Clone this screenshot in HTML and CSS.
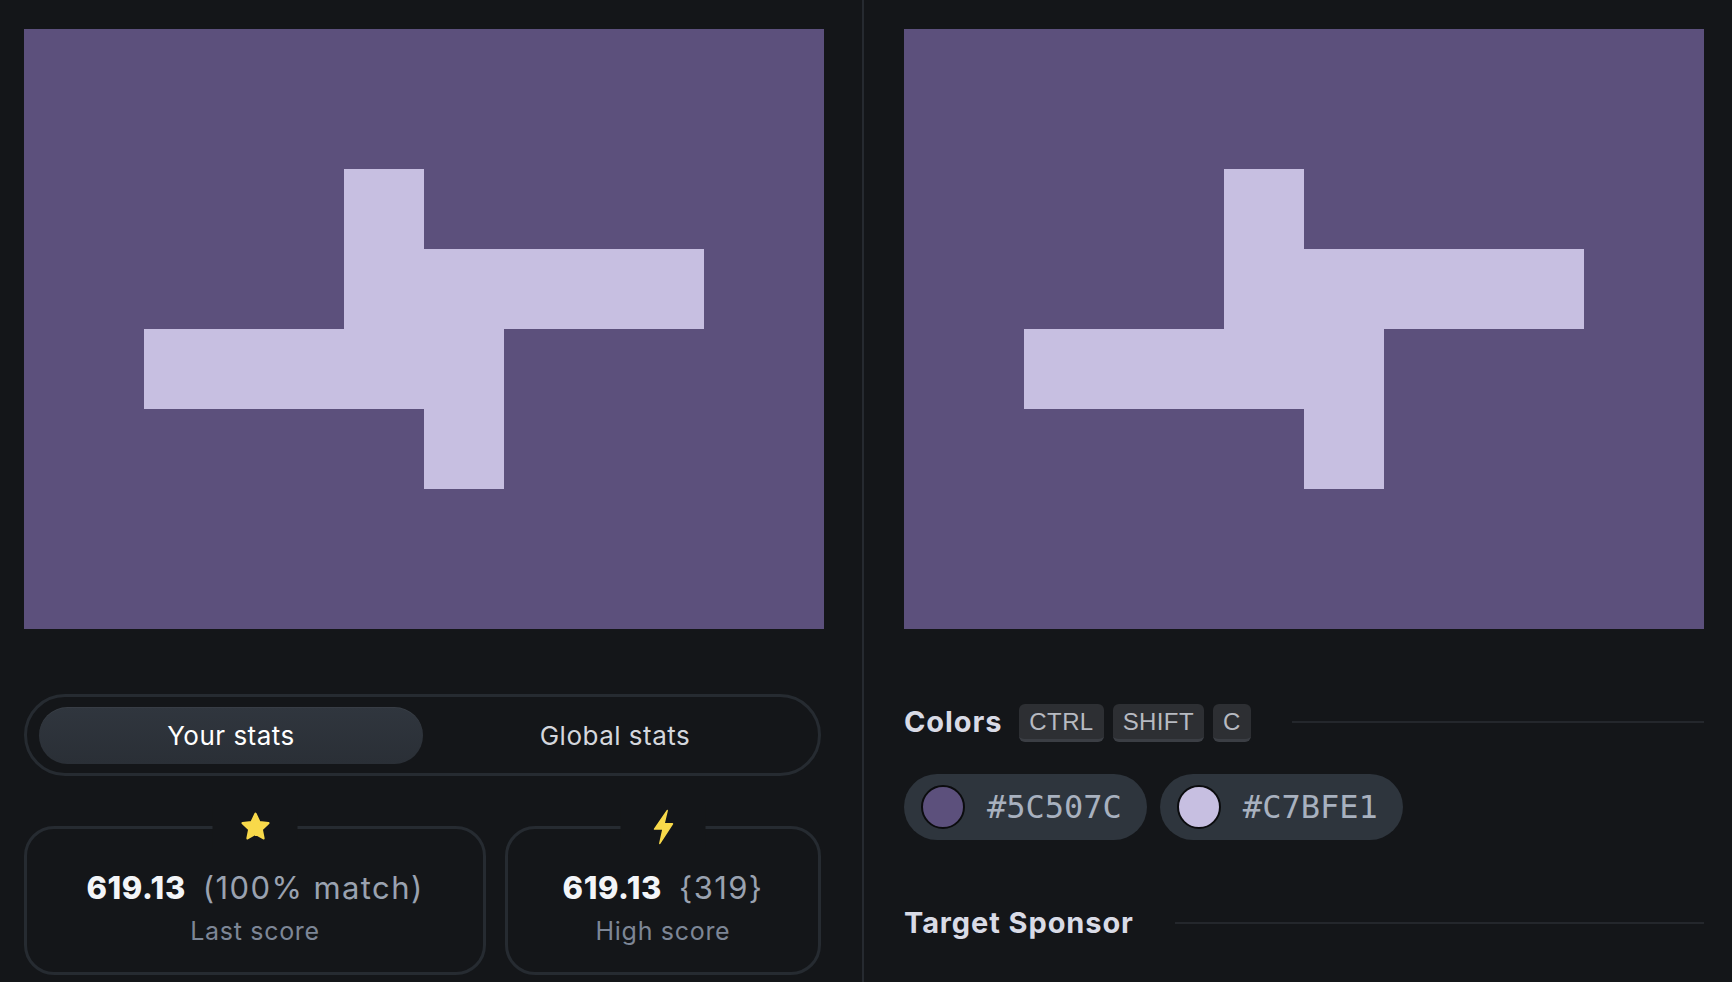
FILE: index.html
```html
<!DOCTYPE html>
<html lang="en">
<head>
<meta charset="utf-8">
<title>Target</title>
<link rel="stylesheet" href="styles.css">
</head>
<body>
<main class="app">
  <section class="panel panel-left">
    <svg class="canvas" width="800" height="600" viewBox="0 0 800 600">
      <rect width="800" height="600" fill="#5C507C"/>
      <g fill="#C7BFE1">
        <rect x="320" y="140" width="80" height="160"/>
        <rect x="320" y="220" width="360" height="80"/>
        <rect x="120" y="300" width="360" height="80"/>
        <rect x="400" y="300" width="80" height="160"/>
      </g>
    </svg>

    <div class="toggle">
      <button class="toggle-btn active">Your stats</button>
      <button class="toggle-btn">Global stats</button>
    </div>

    <div class="cards">
      <div class="card card-wide">
        <span class="card-icon">
          <svg width="34" height="34" viewBox="0 0 24 24"><path d="M12 2.6l2.75 5.9 6.35.75-4.7 4.4 1.25 6.35L12 16.8 6.35 20l1.25-6.35-4.7-4.4 6.35-.75z" fill="#F8D94A" stroke="#F8D94A" stroke-width="1.6" stroke-linejoin="round"/></svg>
        </span>
        <div class="score"><b>619.13</b><span>(100% match)</span></div>
        <div class="label">Last score</div>
      </div>
      <div class="card card-narrow">
        <span class="card-icon">
          <svg width="24" height="36" viewBox="0 0 22 34"><path d="M14.5 1.5L2.5 19h8l-3 13.5L19.5 14h-8z" fill="#F8D94A" stroke="#F8D94A" stroke-width="1.4" stroke-linejoin="round"/></svg>
        </span>
        <div class="score"><b>619.13</b><span>{319}</span></div>
        <div class="label">High score</div>
      </div>
    </div>
  </section>

  <section class="panel panel-right">
    <svg class="canvas" width="800" height="600" viewBox="0 0 800 600">
      <rect width="800" height="600" fill="#5C507C"/>
      <g fill="#C7BFE1">
        <rect x="320" y="140" width="80" height="160"/>
        <rect x="320" y="220" width="360" height="80"/>
        <rect x="120" y="300" width="360" height="80"/>
        <rect x="400" y="300" width="80" height="160"/>
      </g>
    </svg>

    <div class="heading heading-colors">
      <h2>Colors</h2>
      <div class="keys">
        <kbd>CTRL</kbd><kbd>SHIFT</kbd><kbd>C</kbd>
      </div>
      <span class="rule"></span>
    </div>

    <div class="chips">
      <div class="chip"><span class="swatch swatch-dark"></span><span class="hex">#5C507C</span></div>
      <div class="chip"><span class="swatch swatch-light"></span><span class="hex">#C7BFE1</span></div>
    </div>

    <div class="heading heading-sponsor">
      <h2>Target Sponsor</h2>
      <span class="rule"></span>
    </div>
  </section>
</main>
</body>
</html>
```

FILE: styles.css
```css
* { box-sizing: border-box; }

html, body {
  margin: 0;
  padding: 0;
  background: #141619;
  height: 982px;
  overflow: hidden;
  font-family: Inter, "Open Sans", sans-serif;
}

.app {
  display: flex;
  height: 982px;
}

.panel {
  display: flex;
  flex-direction: column;
}

.panel-left {
  flex: none;
  width: 864px;
  padding: 29px 0 0 24px;
  border-right: 2px solid #262a30;
}

.panel-right {
  flex: 1;
  min-width: 0;
  padding: 29px 28px 0 40px;
}

.canvas {
  display: block;
  flex: none;
}

/* toggle */
.toggle {
  margin-top: 65px;
  width: 797px;
  height: 82px;
  border: 3px solid #262b31;
  border-radius: 41px;
  padding: 10px 11px 9px 12px;
  display: grid;
  grid-template-columns: 1fr 1fr;
}

.toggle-btn {
  border: 0;
  background: transparent;
  border-radius: 29px;
  font-family: inherit;
  font-size: 26px;
  letter-spacing: 0.5px;
  color: #d4d7dd;
  cursor: pointer;
}

.toggle-btn.active {
  background: linear-gradient(180deg, #30363e 0%, #2a2f36 100%);
  color: #ffffff;
  box-shadow: inset 0 1px 0 rgba(255,255,255,0.04);
}

/* cards */
.cards {
  margin-top: 50px;
  display: flex;
  gap: 19px;
}

.card {
  position: relative;
  height: 149px;
  border: 3px solid #262b31;
  border-radius: 30px;
  display: flex;
  flex-direction: column;
  align-items: center;
  padding-top: 39px;
}

.card-wide { width: 462px; }
.card-narrow { width: 316px; }

.card-icon {
  position: absolute;
  top: -24px;
  left: 50%;
  transform: translateX(-50%);
  width: 85px;
  height: 44px;
  background: #141619;
  display: flex;
  align-items: center;
  justify-content: center;
}

.score {
  display: flex;
  align-items: baseline;
  gap: 17px;
  font-size: 31px;
  line-height: 40px;
}

.score b {
  color: #f3f5f8;
  font-weight: 800;
  letter-spacing: 0.6px;
}

.score span {
  color: #9aa2b0;
  font-weight: 400;
  letter-spacing: 1.4px;
}

.label {
  margin-top: 8px;
  font-size: 25px;
  line-height: 30px;
  color: #7d8696;
  letter-spacing: 0.7px;
}

/* right */
.heading {
  display: flex;
  align-items: center;
}

.heading h2 {
  margin: 0;
  font-size: 29px;
  font-weight: 700;
  color: #d9dbe6;
  letter-spacing: 0.9px;
  line-height: 36px;
}

.heading-colors {
  margin-top: 73px;
}

.keys {
  display: flex;
  gap: 9px;
  margin-left: 17px;
}

kbd {
  display: inline-block;
  height: 38px;
  padding: 0 10px;
  font-family: "Liberation Sans", Arial, sans-serif;
  font-size: 24px;
  letter-spacing: 0.4px;
  line-height: 35px;
  color: #b7bac1;
  background: #2d2f33;
  border-radius: 6px;
  border-bottom: 3px solid #3b3e44;
  margin-top: 2px;
}

.rule {
  flex: 1;
  height: 2px;
  background: #24272c;
  margin-left: 41px;
}

.chips {
  margin-top: 32px;
  display: flex;
  gap: 13px;
}

.chip {
  display: flex;
  align-items: center;
  height: 66px;
  padding: 0 25px 0 17px;
  background: #2e353d;
  border-radius: 33px;
}

.swatch {
  width: 44px;
  height: 44px;
  border-radius: 50%;
  border: 2px solid #0b0c0e;
}

.swatch-dark { background: #5C507C; }
.swatch-light { background: #C7BFE1; }

.hex {
  margin-left: 22px;
  font-family: "DejaVu Sans Mono", monospace;
  font-size: 32px;
  color: #a8b1bf;
}

.heading-sponsor {
  margin-top: 65px;
}
```
